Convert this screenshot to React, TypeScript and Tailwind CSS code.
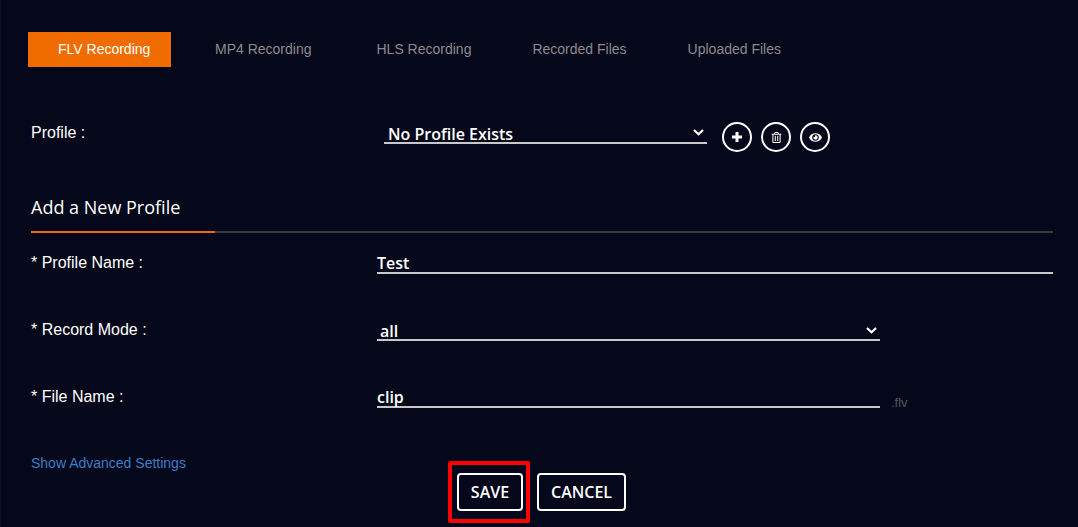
import type { ReactNode } from "react";
import { FaRegTrashAlt, FaEye } from "react-icons/fa";

const sans = "font-['Liberation_Sans',Arial,sans-serif]";
const open = "font-['Open_Sans',sans-serif]";

function Chevron() {
  return (
    <svg width="11" height="7" viewBox="0 0 11 7" fill="none" stroke="#ffffff" strokeWidth="2.2" className="shrink-0">
      <path d="M1 1l4.5 4.2L10 1" />
    </svg>
  );
}

function Circle({ children }: { children: ReactNode }) {
  return (
    <div className="flex h-[30px] w-[30px] items-center justify-center rounded-full border-2 border-white text-white">
      {children}
    </div>
  );
}

const tabs = ["MP4 Recording", "HLS Recording", "Recorded Files", "Uploaded Files"];
const tabGaps = ["ml-[44px]", "ml-[65px]", "ml-[61px]", "ml-[61px]"];

export default function App() {
  return (
    <div className={`h-[527px] w-[1078px] overflow-hidden bg-[#05071a] shadow-[inset_1px_0_0_#0e0f26] ${sans}`}>
      <div className="flex pl-[28px] pt-[32px] text-[14px]">
        <div className="flex h-[35px] w-[143px] items-center bg-[#f06c00] pl-[30px] text-white">FLV Recording</div>
        {tabs.map((t, i) => (
          <div key={t} className={`flex h-[35px] items-center text-[#8c8c8c] ${tabGaps[i]}`}>{t}</div>
        ))}
      </div>

      <div className="flex pl-[31px] pt-[48px]">
        <div className="w-[353px] pt-[8px] text-[16px] leading-[20px] text-white">Profile :</div>
        <div className={`flex h-[29px] w-[323px] items-center justify-between border-b-2 border-[#c8c8c8] pl-[4px] pr-[3px] pt-[10px] text-[16px] font-semibold text-white ${open}`}>
          <span>No Profile Exists</span>
          <span className="mb-[2px]"><Chevron /></span>
        </div>
        <div className="ml-[15px] mt-[7px] flex gap-[9px]">
          <Circle>
            <svg width="10" height="10" viewBox="0 0 10 10" stroke="#ffffff" strokeWidth="3" fill="none">
              <path d="M5 0v10M0 5h10" />
            </svg>
          </Circle>
          <Circle><FaRegTrashAlt size={11} /></Circle>
          <Circle><FaEye size={13} /></Circle>
        </div>
      </div>

      <div className="ml-[31px] mr-[25px] mt-[43px]">
        <div className={`text-[18px] leading-[24px] text-white ${open}`}>Add a New Profile</div>
        <div className="mt-[12px] h-[2px] bg-[#3a3a3a]">
          <div className="h-[2px] w-[184px] bg-[#f06c00]" />
        </div>
      </div>

      <div className="flex pl-[31px] pt-[20px]">
        <div className="w-[346px] text-[16px] leading-[20px] text-white">* Profile Name :</div>
        <div className={`h-[21px] w-[676px] border-b-2 border-[#c8c8c8] text-[16px] leading-[20px] font-semibold text-white ${open}`}>Test</div>
      </div>

      <div className="flex pl-[31px] pt-[46px]">
        <div className="w-[346px] text-[16px] leading-[20px] text-white">* Record Mode :</div>
        <div className={`flex h-[21px] w-[503px] items-center justify-between border-b-2 border-[#c8c8c8] pl-[3px] pr-[3px] pt-[2px] text-[16px] font-semibold text-white ${open}`}>
          <span>all</span>
          <Chevron />
        </div>
      </div>

      <div className="flex pl-[31px] pt-[46px]">
        <div className="w-[346px] text-[16px] leading-[20px] text-white">* File Name :</div>
        <div className={`h-[21px] w-[503px] border-b-2 border-[#c8c8c8] text-[16px] leading-[20px] font-semibold text-white ${open}`}>clip</div>
        <div className="ml-[11px] mt-[9px] text-[13px] leading-[14px] text-[#55565f]">.flv</div>
      </div>

      <div className="flex items-start pl-[31px] pt-[44px]">
        <div className="w-[426px] text-[14px] leading-[18px] text-[#3a7fc8]">Show Advanced Settings</div>
        <div className={`mt-[19px] flex gap-[14px] text-[16px] font-semibold text-white ${open}`}>
          <div className="relative flex h-[38px] w-[66px] items-center justify-center rounded-[4px] border-2 border-white">
            SAVE
            <div className="absolute -top-[14px] -bottom-[14px] -left-[11px] -right-[9px] rounded-[2px] border-[4px] border-[#ff0000]" />
          </div>
          <div className="flex h-[38px] w-[89px] items-center justify-center rounded-[4px] border-2 border-white">CANCEL</div>
        </div>
      </div>
    </div>
  );
}
